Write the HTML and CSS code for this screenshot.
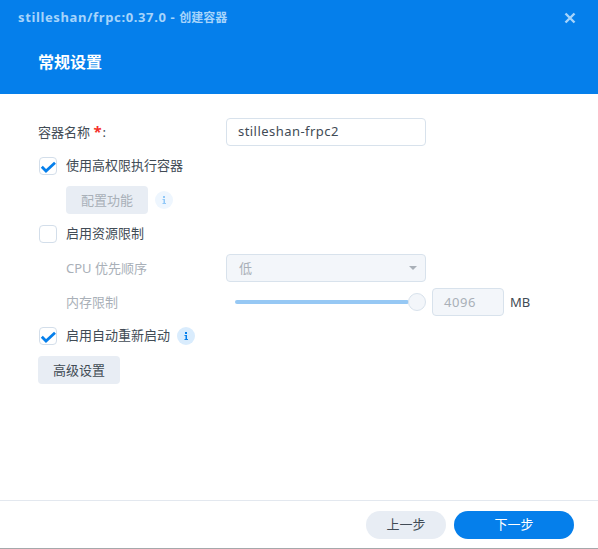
FILE: index.html
```html
<!DOCTYPE html>
<html lang="zh-CN">
<head>
    <meta charset="UTF-8">
    <title>创建容器</title>
    <link rel="stylesheet" href="styles.css">
</head>
<body>
    <div class="dialog">
        <div class="header">
            <div class="titlebar">
                <span class="title"><span class="title-latin">stilleshan/frpc:0.37.0 - </span>创建容器</span>
                <svg class="close" width="12" height="12" viewBox="0 0 12 12">
                    <path d="M1.5 1.5L10.5 10.5M10.5 1.5L1.5 10.5" stroke="#a6d4fb" stroke-width="2.4"/>
                </svg>
            </div>
            <h1>常规设置</h1>
        </div>
        <div class="content">
            <div class="row name-row">
                <label class="name-label">容器名称 <span class="req">*</span>:</label>
                <div class="input">stilleshan-frpc2</div>
            </div>
            <div class="row check-row">
                <span class="check">
                    <svg width="18" height="18" viewBox="0 0 18 18"><path d="M2.8 9.8L7 14L16 5.8" fill="none" stroke="#057feb" stroke-width="2.8"/></svg>
                </span>
                <span class="check-text">使用高权限执行容器</span>
            </div>
            <div class="row sub-row">
                <button class="btn disabled">配置功能</button>
                <span class="info faded">
                    <svg width="18" height="18" viewBox="0 0 18 18"><path d="M8 5h2v2H8zM7.5 8H10v4h1v1H7.5v-1h1V9h-1z" fill="#91c8f7"/></svg>
                </span>
            </div>
            <div class="row check-row">
                <span class="check"></span>
                <span class="check-text">启用资源限制</span>
            </div>
            <div class="row limit-row">
                <span class="limit-label">CPU 优先顺序</span>
                <div class="select">低<span class="caret"></span></div>
            </div>
            <div class="row limit-row mem-row">
                <span class="limit-label">内存限制</span>
                <div class="slider"><span class="track"></span><span class="thumb"></span></div>
                <div class="num">4096</div>
                <span class="unit">MB</span>
            </div>
            <div class="row check-row">
                <span class="check">
                    <svg width="18" height="18" viewBox="0 0 18 18"><path d="M2.8 9.8L7 14L16 5.8" fill="none" stroke="#057feb" stroke-width="2.8"/></svg>
                </span>
                <span class="check-text">启用自动重新启动</span>
                <span class="info auto">
                    <svg width="18" height="18" viewBox="0 0 18 18"><path d="M8 5h2v2H8zM7.5 8H10v4h1v1H7.5v-1h1V9h-1z" fill="#057feb"/></svg>
                </span>
            </div>
            <button class="btn advanced">高级设置</button>
        </div>
        <div class="footer">
            <button class="pill back">上一步</button>
            <button class="pill next">下一步</button>
        </div>
    </div>
</body>
</html>
```

FILE: styles.css
```css
html, body {
    margin: 0;
    padding: 0;
    height: 100%;
    background: #fff;
}
body {
    font-family: "Noto Sans", "Noto Sans CJK SC", sans-serif;
    font-size: 13px;
    color: #414b55;
}
.dialog {
    height: 549px;
    display: flex;
    flex-direction: column;
    box-sizing: border-box;
    border-bottom: 1px solid #a5a8ab;
    overflow: hidden;
}
.header {
    height: 94px;
    flex: none;
    background: #057feb;
}
.titlebar {
    height: 36px;
    display: flex;
    align-items: center;
    justify-content: space-between;
    padding: 0 22px 0 18px;
}
.title {
    font-size: 12px;
    font-weight: 700;
    color: #a6d4fb;
    margin-top: -2px;
}
.title-latin {
    font-size: 13px;
    letter-spacing: 0.63px;
}
h1 {
    margin: 8px 0 0 38px;
    font-size: 16px;
    line-height: 36px;
    font-weight: 700;
    color: #fff;
}
.content {
    flex: 1;
    padding: 24px 0 0 38px;
}
.row {
    display: flex;
    align-items: center;
}
.name-row {
    height: 28px;
}
.name-label {
    width: 188px;
    padding-bottom: 2px;
}
.req {
    color: #f5312b;
    font-size: 15px;
    font-weight: 700;
    line-height: 13px;
    margin-right: 1px;
}
.input {
    width: 200px;
    height: 28px;
    box-sizing: border-box;
    padding-left: 11px;
    line-height: 25px;
    letter-spacing: 0.45px;
    border: 1px solid #d8e2ec;
    border-radius: 4px;
}
.check-row {
    height: 20px;
    margin-top: 10px;
    gap: 9px;
}
.check-text {
    padding-bottom: 3px;
}
.check {
    width: 18px;
    height: 18px;
    margin-left: 1px;
    box-sizing: border-box;
    border: 1px solid #d3deea;
    border-radius: 4px;
    display: flex;
    align-items: center;
    justify-content: center;
}
.check svg {
    flex: none;
}
.sub-row {
    margin: 10px 0 0 28px;
    gap: 7px;
}
.btn {
    width: 82px;
    height: 28px;
    border: none;
    border-radius: 4px;
    padding: 0 0 2px;
    background: #e8edf4;
    color: #414b55;
    font: inherit;
}
.btn.disabled {
    color: #a9b0b8;
}
.info {
    width: 18px;
    height: 18px;
    border-radius: 50%;
    background: #d9ecfd;
}
.info svg {
    display: block;
}
.info.faded {
    background: #eef6fe;
}
.info.auto {
    margin-left: -2px;
}
.limit-row {
    margin-top: 10px;
    height: 28px;
    padding-left: 28px;
}
.limit-row .limit-label {
    width: 160px;
    padding-bottom: 2px;
    color: #a9b0b8;
}
.select {
    width: 200px;
    height: 28px;
    box-sizing: border-box;
    padding: 0 8px 2px 12px;
    display: flex;
    align-items: center;
    justify-content: space-between;
    background: #f3f6fa;
    border: 1px solid #d8e2ec;
    border-radius: 4px;
    color: #a9b0b8;
}
.caret {
    margin-top: 2px;
    border: 4px solid transparent;
    border-top: 4px solid #a9b0b8;
    border-bottom: none;
}
.mem-row {
    margin-top: 6px;
}
.slider {
    width: 191px;
    margin-left: 9px;
    height: 18px;
    display: flex;
    align-items: center;
}
.track {
    flex: 1;
    height: 4px;
    border-radius: 2px;
    background: #96c8f4;
}
.thumb {
    width: 18px;
    height: 18px;
    flex: none;
    box-sizing: border-box;
    margin-left: -1px;
    border: 1px solid #d8e2ec;
    border-radius: 50%;
    background: #f3f6fa;
}
.num {
    width: 72px;
    height: 28px;
    box-sizing: border-box;
    margin-left: 6px;
    padding-left: 11px;
    line-height: 26px;
    letter-spacing: 0.6px;
    background: #f3f6fa;
    border: 1px solid #d8e2ec;
    border-radius: 4px;
    color: #a9b0b8;
}
.unit {
    margin-left: 6px;
}
.advanced {
    display: block;
    margin-top: 10px;
}
.footer {
    flex: none;
    height: 48px;
    box-sizing: border-box;
    border-top: 1px solid #e3e8ef;
    display: flex;
    align-items: center;
    justify-content: flex-end;
    gap: 8px;
    padding-right: 24px;
}
.pill {
    height: 28px;
    border: none;
    border-radius: 14px;
    padding: 0 0 2px;
    font: inherit;
}
.back {
    width: 80px;
    background: #e8edf4;
    color: #414b55;
}
.next {
    width: 120px;
    background: #057feb;
    color: #fff;
}
```
